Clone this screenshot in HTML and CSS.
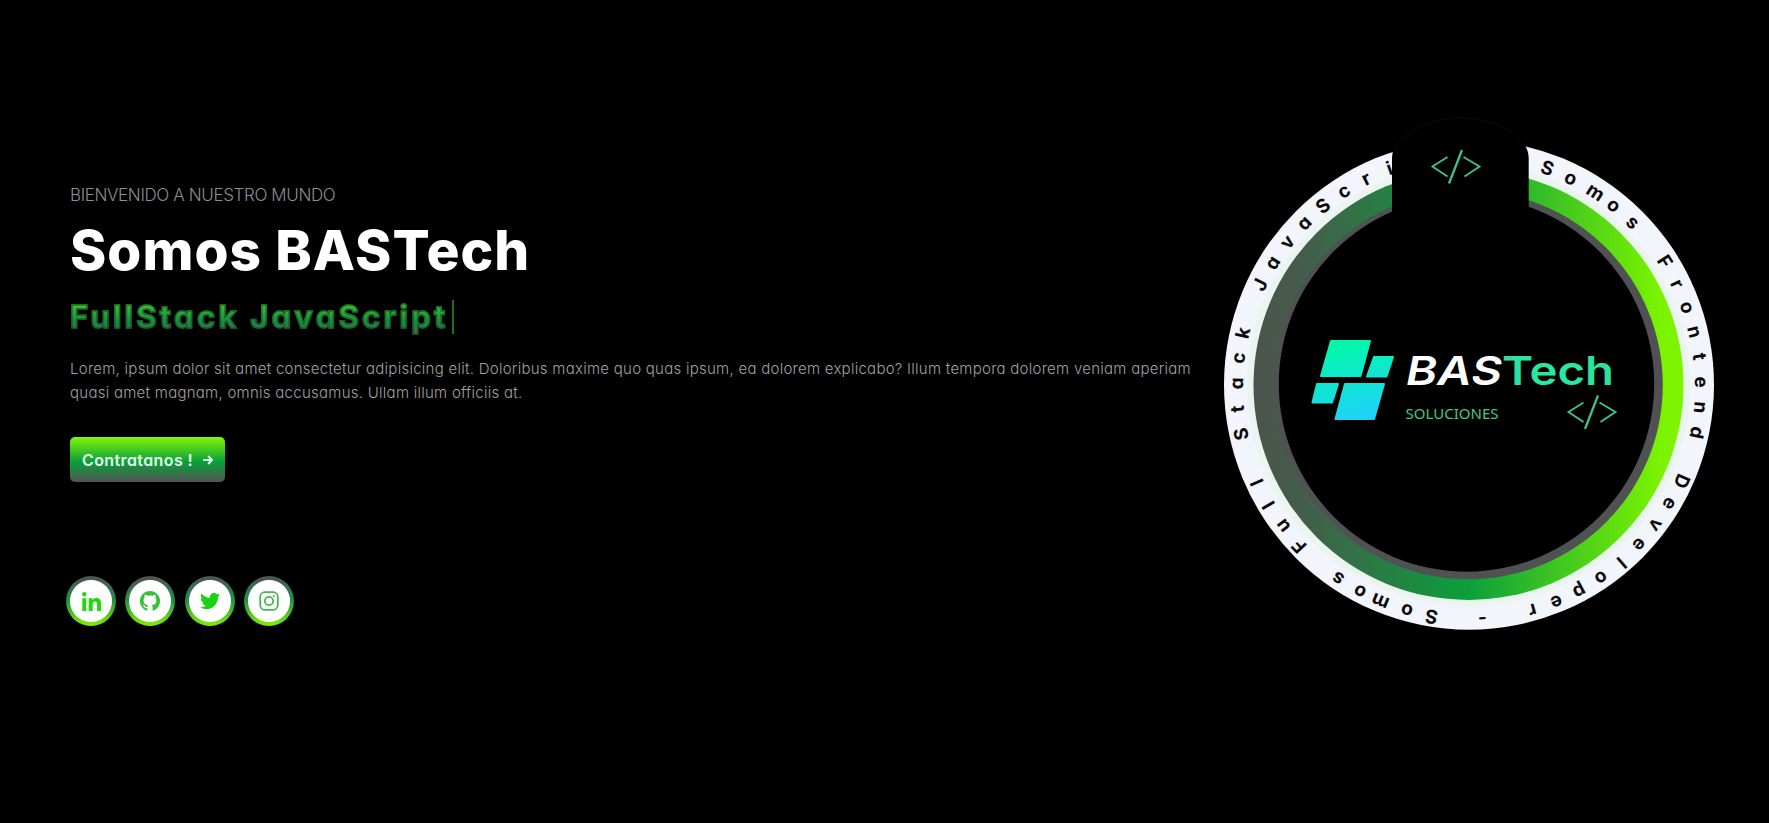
FILE: index.html
```html
<!DOCTYPE html>
<html lang="es">
<head>
<meta charset="utf-8">
<title>BASTech</title>
<link rel="stylesheet" href="styles.css">
</head>
<body>
<main class="hero">
  <section class="intro">
    <p class="welcome">BIENVENIDO A NUESTRO MUNDO</p>
    <h1 class="title">Somos BASTech</h1>
    <div class="typed"><span class="typed-text">FullStack JavaScript</span><span class="cursor"></span></div>
    <p class="lead"><span class="line line-a">Lorem, ipsum dolor sit amet consectetur adipisicing elit. Doloribus maxime quo quas ipsum, ea dolorem explicabo? Illum tempora dolorem veniam aperiam</span> <span class="line line-b">quasi amet magnam, omnis accusamus. Ullam illum officiis at.</span></p>
    <a class="cta"><span class="cta-text">Contratanos !</span>
      <svg width="10" height="10" viewBox="0 0 10 10" fill="none" stroke="currentColor" stroke-width="1.900"><path d="M0.300 5H9M5.200 1L9 5L5.200 9"/></svg>
    </a>
    <nav class="social">
      <a class="dot"><svg width="19" height="19" viewBox="0 0 448 448" fill="#22d80c"><path d="M100 448H7V149h93zM53.800 108C24 108 0 83.500 0 53.800a53.800 53.800 0 0 1 107.600 0c0 29.700-24 54.200-53.800 54.200zM448 448h-92.700V302c0-34.700-.7-79-48.300-79-48.300 0-55.700 37.700-55.700 76.700V448h-93V149h89v41h1.300c12.400-23.500 42.700-48.300 88-48.300 94 0 111.300 62 111.300 142.300V448z"/></svg></a>
      <a class="dot"><svg width="22" height="22" viewBox="0 0 24 24" fill="#35c238"><path d="M12 1C5.700 1 1 5.800 1 12c0 4.900 3 8.900 7.400 10.500.6.100.8-.3.800-.6v-2.100c-3 .6-3.700-1.400-3.700-1.400-.5-1.300-1.200-1.600-1.200-1.600-1-.7.1-.7.1-.7 1.100.1 1.700 1.100 1.700 1.100 1 1.700 2.600 1.200 3.200.9.100-.7.400-1.200.7-1.500-2.400-.3-5-1.200-5-5.400 0-1.200.4-2.200 1.100-3-.1-.3-.5-1.400.1-2.900 0 0 .9-.3 3 1.100a10.500 10.500 0 0 1 5.600 0c2.100-1.400 3-1.100 3-1.100.6 1.500.2 2.600.1 2.900.7.800 1.100 1.800 1.100 3 0 4.200-2.600 5.100-5 5.400.4.300.8 1 .8 2.100v3.200c0 .3.200.7.800.6C20 20.900 23 16.900 23 12 23 5.800 18.300 1 12 1z"/></svg></a>
      <a class="dot"><svg width="20" height="20" viewBox="0 0 512 512" fill="#16d311"><path d="M459.400 151.700c.3 4.500.3 9.100.3 13.600 0 138.700-105.600 298.600-298.600 298.600-59.500 0-114.700-17.200-161.100-47.100 8.400 1 16.600 1.300 25.300 1.300 49.100 0 94.200-16.600 130.300-44.800-46.100-1-84.800-31.200-98.100-72.800 6.500 1 13 1.600 19.800 1.600 9.400 0 18.800-1.300 27.600-3.600-48.100-9.700-84.100-52-84.100-103v-1.300c14 7.800 30.200 12.700 47.400 13.300-28.300-18.800-46.800-51-46.800-87.400 0-19.500 5.200-37.400 14.300-53 51.700 63.700 129.300 105.300 216.400 109.800-1.600-7.800-2.600-15.900-2.600-24 0-57.800 46.800-104.900 104.900-104.900 30.200 0 57.500 12.700 76.700 33.100 23.700-4.500 46.500-13.300 66.600-25.300-7.800 24.400-24.400 44.800-46.100 57.800 21.100-2.300 41.600-8.100 60.400-16.200-14.300 20.800-32.200 39.300-52.600 54.300z"/></svg></a>
      <a class="dot"><svg width="20" height="20" viewBox="0 0 20 20" fill="none" stroke="#4bb451" stroke-width="1.800"><rect x="1.200" y="1.200" width="17.600" height="17.600" rx="4.500"/><circle cx="10" cy="10" r="4.200"/><circle cx="14.900" cy="5.100" r=".4" stroke-width="1.300"/></svg></a>
    </nav>
  </section>
  <svg class="badge" width="492" height="520" viewBox="1223 114 492 520">
    <defs>
      <linearGradient id="band"><stop offset="0" stop-color="#4c534d"/><stop offset=".12" stop-color="#435e4b"/><stop offset=".5" stop-color="#0b9f3c"/><stop offset=".95" stop-color="#7cf400"/></linearGradient>
      <linearGradient id="tile" gradientUnits="userSpaceOnUse" x1="1350" y1="338" x2="1372" y2="422"><stop offset="0" stop-color="#00f9a6"/><stop offset="1" stop-color="#22d0ff"/></linearGradient>
      <linearGradient id="tech"><stop offset="0" stop-color="#2fdf9f"/><stop offset=".5" stop-color="#25eaa4"/><stop offset="1" stop-color="#2fdf98"/></linearGradient>
      <g id="code" fill="none" stroke="#3fc08d" stroke-width="1.900"><path d="M16.500 7.500L1.500 17L16.500 27"/><path d="M31 .5L18 34" stroke-width="2.300"/><path d="M32.500 7.500L48.500 17L33.500 27"/></g>
    </defs>
    <circle cx="1469" cy="384.700" r="245" fill="#f2f5fb"/>
    <circle cx="1468.500" cy="385" r="218" fill="none" stroke="#ebf5ef" stroke-width="7"/>
    <circle cx="1468.500" cy="385" r="215" fill="url(#band)"/>
    <circle cx="1468.500" cy="385" r="194.300" fill="#505153"/>
    <circle cx="1466.500" cy="384" r="187.700" fill="#000"/>
    <g id="ring" class="ring"></g>
    <path d="M1392 212V158C1392 136 1424 118 1460.300 118S1528.700 136 1528.700 158V212Z" fill="#000"/>
    <path d="M1395 151C1403 131 1430 118 1460.300 118S1518 131 1524 147" fill="none" stroke="#0c0c0c"/>
    <use href="#code" x="1431" y="149.500"/>
    <g fill="url(#tile)" stroke="url(#tile)" stroke-width="2" stroke-linejoin="round">
      <path d="M1331 341H1370L1360.500 376H1321Z"/>
      <path d="M1374 357H1393L1386.500 376.500H1367Z"/>
      <path d="M1317 384H1338L1332 402.500H1312.500Z"/>
      <path d="M1345 384H1384L1374 419H1335.500Z"/>
    </g>
    <text class="logo bas" x="1406" y="385" textLength="96" lengthAdjust="spacingAndGlyphs">BAS</text>
    <text class="logo" x="1502" y="385" textLength="112" lengthAdjust="spacingAndGlyphs" fill="url(#tech)">Tech</text>
    <text class="sub" x="1405.500" y="418.500" textLength="93" lengthAdjust="spacingAndGlyphs">SOLUCIONES</text>
    <use href="#code" x="1567" y="395"/>
  </svg>
</main>
<script src="ring.js"></script>
</body>
</html>
```
FILE: styles.css
```css
* { box-sizing: border-box; }
body { margin: 0; background: #000; color: #fff; font-family: Inter, "Open Sans", sans-serif; font-feature-settings: "cv11" 1; overflow: hidden; }
.hero { width: 1769px; height: 823px; display: flex; padding: 114px 54px 0 70px; justify-content: space-between; align-items: flex-start; }
.intro { width: 1130px; padding-top: 66px; display: flex; flex-direction: column; align-items: flex-start; }
.badge { display: block; flex: none; }
p, h1 { margin: 0; }
.welcome { font-size: 17px; line-height: 30px; font-weight: 300; color: #8d8e90; letter-spacing: -.37px; white-space: nowrap; }
.title { margin-top: 8px; font-size: 55px; line-height: 64px; font-weight: 800; white-space: nowrap; letter-spacing: 1.050px; }
.typed { display: flex; align-items: center; height: 34px; margin-top: 18px; gap: 3px; white-space: nowrap; }
.typed-text { font-size: 31px; line-height: 40px; font-weight: 700; letter-spacing: 3.250px; background: linear-gradient(#6de010 0%, #35bb32 25%, #179040 60%, #4b5b4f 100%); -webkit-background-clip: text; background-clip: text; color: transparent; -webkit-text-stroke: 1.500px rgba(20, 75, 28, .65); }
.cursor { width: 2px; height: 34px; background: #1d6b2b; }
.lead { margin-top: 23px; font-size: 15px; line-height: 24px; font-weight: 300; color: #a0a1a3; letter-spacing: .265px; }
.line { display: block; white-space: nowrap; }
.cta { display: flex; align-items: center; justify-content: center; gap: 10px; width: 155px; height: 45px; margin-top: 32px; border-radius: 5px; background: linear-gradient(#82f707, #0a9f3b 55%, #525453); color: #e3ffe9; font-size: 16px; font-weight: 600; letter-spacing: .4px; white-space: nowrap; }
.social { display: flex; gap: 9.400px; margin: 94px 0 0 -4px; }
.dot { width: 50px; height: 50px; border-radius: 50%; display: flex; align-items: center; justify-content: center; background: radial-gradient(circle, #fff 20.500px, transparent 21.500px), linear-gradient(#505050, #209049 48%, #80f000); }
.ring { font-size: 19px; font-weight: 700; fill: #0a0a0c; text-anchor: middle; }
.logo { font-family: Inter, sans-serif; font-size: 40px; font-weight: 600; }
.bas { font-style: italic; fill: #fff; }
.sub { font-family: "Noto Sans", sans-serif; font-size: 14.500px; fill: #43c987; }
```
FILE: ring.js
```js
// Spreads the caption clockwise round the badge, one glyph per step.
const caption = "Somos Frontend Developer - Somos Full Stack JavaScri";
const ring = document.getElementById("ring");
[...caption].forEach((ch, i) => {
  if (ch === " ") return;
  const t = document.createElementNS("http://www.w3.org/2000/svg", "text");
  t.setAttribute("transform", `translate(1469 387) rotate(${19.7 + i * 6.28 + (ch === "m" ? 0.7 : 0)}) translate(0 -226)`);
  t.textContent = ch;
  ring.append(t);
});
```
